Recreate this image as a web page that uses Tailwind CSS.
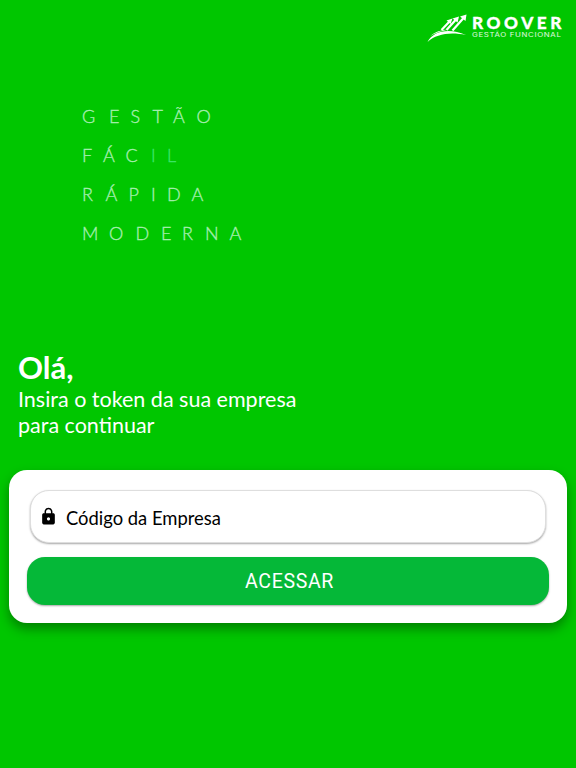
<!DOCTYPE html>
<html lang="pt-BR">
<head>
    <meta charset="UTF-8">
    <meta name="viewport" content="width=device-width, initial-scale=1.0">
    <title>Roover - Gestão Funcional</title>
    <script src="https://cdn.jsdelivr.net/npm/@tailwindcss/browser@4"></script>
</head>
<body class="bg-[#00c600] font-['Lato',sans-serif] text-white">
    <div class="flex h-screen flex-col overflow-hidden">
        <!-- Logo -->
        <header class="flex h-[50px] shrink-0 justify-end pt-3 pr-3">
            <svg class="h-[34px] w-[138px]" viewBox="426 12 138 34" fill="none">
                <path d="M427.500 42C433 31 449 27.500 466 35C450 31.500 436 34 427.500 42Z" fill="#fff"/>
                <path d="M430.500 36C435 32 441 30 449 29.600C441 31 436 33 430.500 36Z" fill="#fff"/>
                <path d="M441.500 30L450 21M446.500 30L456 19.500M452.500 30.500L464 17.500" stroke="#fff" stroke-width="2.200"/>
                <path d="M446.500 20.500L452.500 18.500L450.500 24ZM452.500 18.500L459 16.500L457.500 22.500ZM460 16.500L466.500 14.500L465.500 21Z" fill="#fff"/>
                <text x="472" y="29" textLength="93" lengthAdjust="spacingAndGlyphs" class="fill-white stroke-white stroke-[0.300] font-['Lato',sans-serif] text-[17px] font-black tracking-[3.500px]">ROOVER</text>
                <text x="472" y="37.300" textLength="89.500" lengthAdjust="spacingAndGlyphs" class="fill-white/90 font-['Inter',sans-serif] text-[6px] tracking-[0.500px]">GESTÃO FUNCIONAL</text>
            </svg>
        </header>

        <!-- Slogan -->
        <section class="h-[300px] shrink-0 pt-[45px] pl-20">
            <svg class="h-[160px] w-[170px] fill-[#a5efaf] stroke-[#a5efaf] stroke-[0.350] font-['Lato',sans-serif] text-[18px] font-light" viewBox="80 95 170 160">
                <text y="123" x="82 109 130.500 152.500 173 196.500">GESTÃO</text>
                <text y="162" x="82 103 125.500 151 167">FÁC<tspan class="fill-[#3ce568] stroke-[#3ce568]">IL</tspan></text>
                <text y="201" x="82 105.500 128.500 151 167 191.500">RÁPIDA</text>
                <text y="240" x="82 109 135.500 161 182 205 229.500">MODERNA</text>
            </svg>
        </section>

        <!-- Saudação -->
        <section class="h-[120px] shrink-0 pl-[18px]">
            <h1 class="-mt-px mb-px text-[31px] leading-[36px] font-bold">Olá,</h1>
            <p class="text-[21.500px] leading-[26px]">Insira o token da sua empresa<br>para continuar</p>
        </section>

        <!-- Formulário -->
        <form class="mx-[9px] h-[152.500px] shrink-0 rounded-[18px] bg-white px-[18px] pt-5 shadow-[0_6px_12px_rgba(0,0,0,0.35)]">
            <label class="mx-[3px] flex h-[53px] items-center rounded-[19px] border border-[#dedede] bg-white pl-2 text-black shadow-[0_1px_2px_rgba(0,0,0,0.35)]">
                <svg class="mb-px size-[19px]" viewBox="0 0 24 24" fill="currentColor">
                    <path d="M18 8h-1V6c0-2.760-2.240-5-5-5S7 3.240 7 6v2H6c-1.100 0-2 .9-2 2v10c0 1.100.9 2 2 2h12c1.100 0 2-.9 2-2V10c0-1.100-.9-2-2-2zm-6 9c-1.100 0-2-.9-2-2s.9-2 2-2 2 .9 2 2-.9 2-2 2zm3.100-9H8.900V6c0-1.710 1.390-3.100 3.100-3.100s3.100 1.390 3.100 3.100v2z"/>
                </svg>
                <span class="pt-1 pl-2 text-[18.400px]">Código da Empresa</span>
            </label>
            <button type="button" class="mt-[14px] h-[47.500px] w-full rounded-[18px] bg-[#05b838] pt-0.5 pl-[3px] font-['Roboto',sans-serif] text-[19.500px] tracking-[0.650px] shadow-[0_1px_2px_rgba(0,0,0,0.35)]">ACESSAR</button>
        </form>
    </div>
</body>
</html>
